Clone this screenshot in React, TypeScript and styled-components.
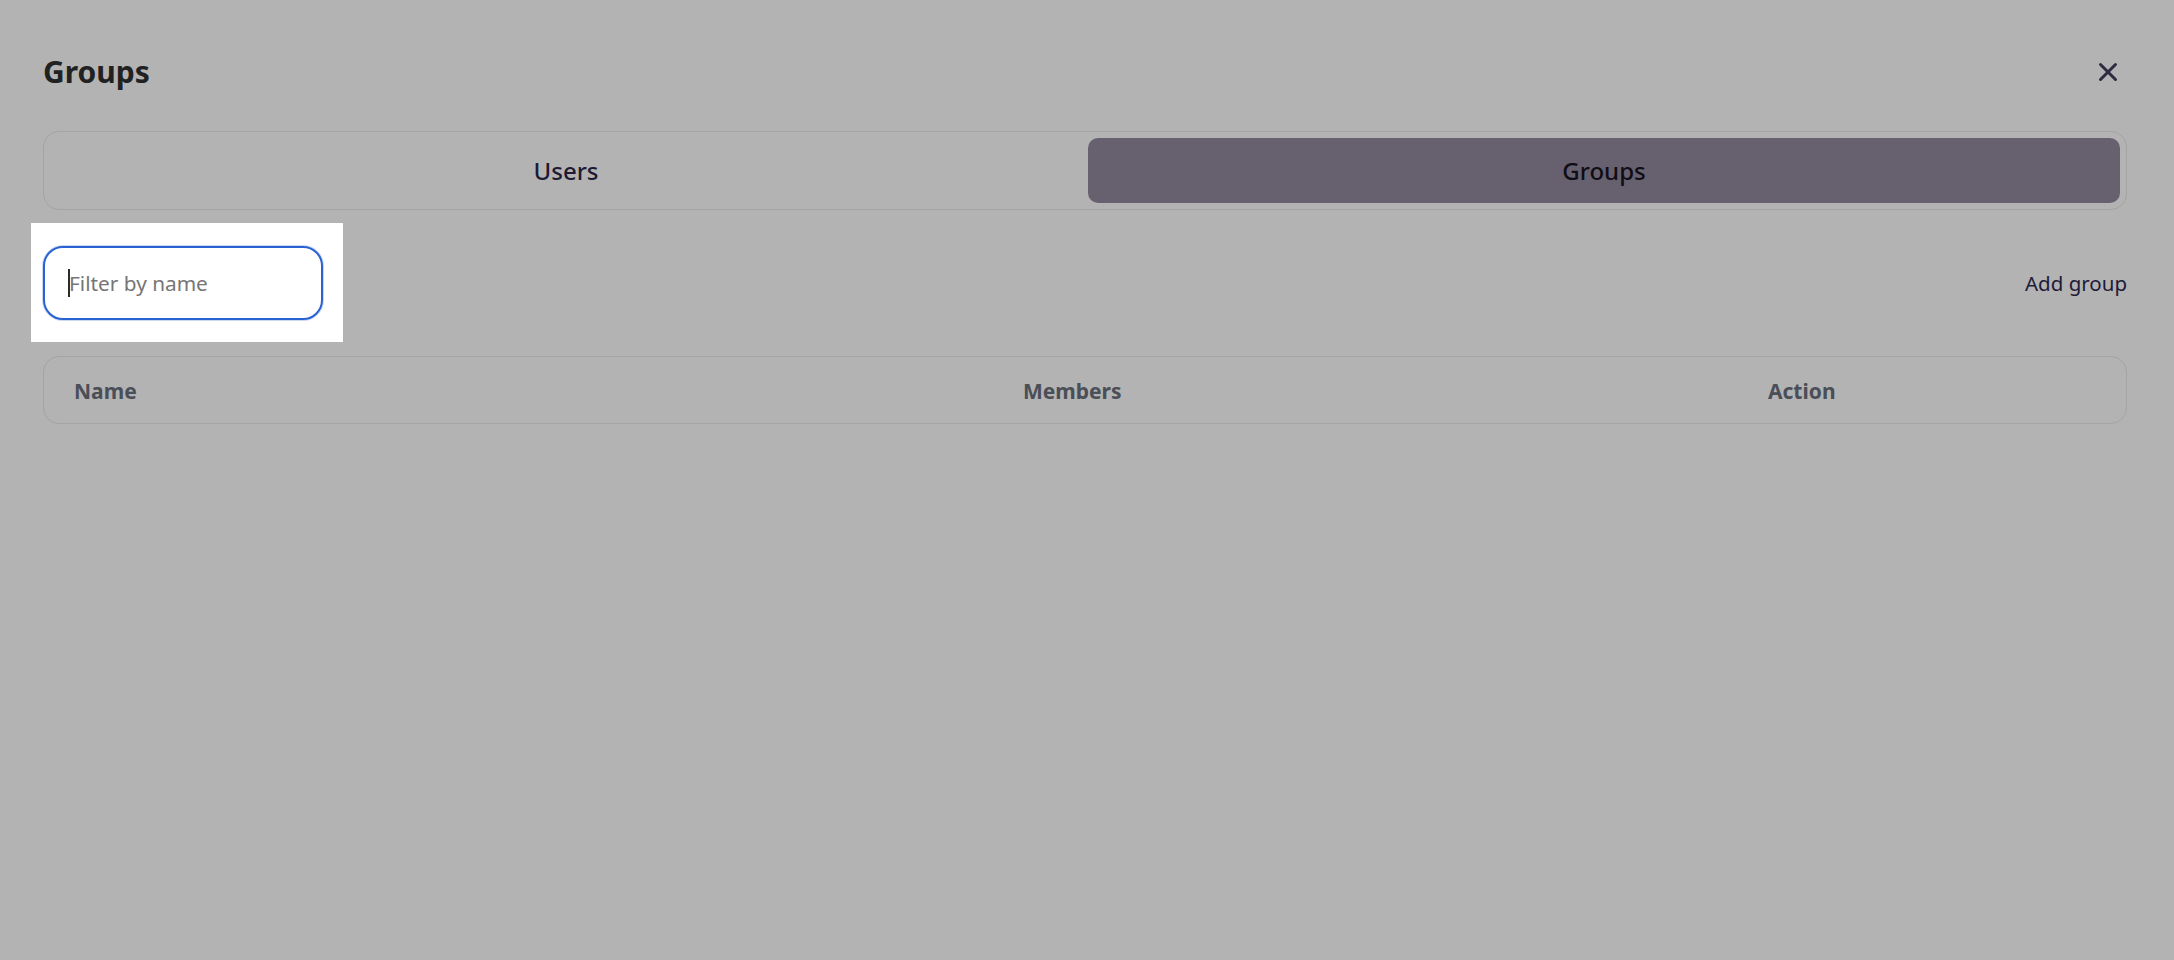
import styled, { createGlobalStyle } from 'styled-components';

const GlobalStyle = createGlobalStyle`
  html, body {
    margin: 0;
    padding: 0;
    background: #b3b3b3;
  }
  body {
    font-family: "Noto Sans", "Open Sans", Arial, sans-serif;
  }
  * {
    box-sizing: border-box;
  }
`;

const Page = styled.div`
  width: 2174px;
  height: 960px;
  padding: 52px 47px 0 43px;
  background: #b3b3b3;
  overflow: hidden;
`;

const Header = styled.div`
  display: flex;
  align-items: center;
  justify-content: space-between;
`;

const Title = styled.h1`
  margin: 0;
  font-size: 30px;
  font-weight: 700;
  line-height: 38px;
  color: #212121;
`;

const CloseButton = styled.button`
  display: flex;
  align-items: center;
  justify-content: center;
  width: 40px;
  height: 40px;
  margin-right: -1px;
  padding: 0;
  border: none;
  background: transparent;
  cursor: pointer;
`;

const Tabs = styled.div`
  display: flex;
  gap: 6px;
  margin-top: 39px;
  padding: 6px;
  border: 1px solid #a4a4a4;
  border-radius: 16px;
`;

const Tab = styled.button<{ $active?: boolean }>`
  flex: 1;
  height: 65px;
  display: flex;
  align-items: center;
  justify-content: center;
  border: none;
  border-radius: 10px;
  font-family: inherit;
  font-size: 24px;
  font-weight: 500;
  color: ${(p) => (p.$active ? '#0f0d15' : '#1d1a33')};
  background: ${(p) => (p.$active ? '#67616f' : 'transparent')};
  cursor: pointer;
`;

const Toolbar = styled.div`
  display: flex;
  align-items: center;
  justify-content: space-between;
  margin-top: 36px;
`;

const Spotlight = styled.div`
  position: relative;
  margin: -23px 0 -22px -12px;
  padding: 23px 20px 22px 12px;
  background: #ffffff;
`;

const Caret = styled.span`
  position: absolute;
  left: 37px;
  top: 46px;
  width: 2px;
  height: 28px;
  background: #2b2b2b;
  pointer-events: none;
`;

const FilterInput = styled.input`
  display: block;
  width: 280px;
  height: 74px;
  padding: 0 20px 0 24px;
  border: 2px solid #2a62d1;
  border-radius: 20px;
  box-shadow: 0 0 0 1px rgba(42, 98, 209, 0.25);
  outline: none;
  font-family: inherit;
  font-size: 20.8px;
  color: #222;
  caret-color: transparent;
  background: #fff;

  &::placeholder {
    color: #767676;
  }
`;

const AddButton = styled.button`
  padding: 0;
  border: none;
  background: transparent;
  font-family: inherit;
  font-size: 20.5px;
  color: #1e1a3a;
  cursor: pointer;
`;

const TableHead = styled.div`
  display: grid;
  grid-template-columns: 949px 745px 1fr;
  align-items: center;
  height: 68px;
  margin-top: 36px;
  padding: 2px 0 0 30px;
  border: 1px solid #a4a4a4;
  border-radius: 16px;
`;

const HeadCell = styled.div`
  font-size: 21px;
  font-weight: 700;
  color: #4a4e57;
`;

const CloseIcon = () => (
  <svg width="20" height="20" viewBox="0 0 20 20" fill="none">
    <path
      d="M2.5 2.5L17.5 17.5M17.5 2.5L2.5 17.5"
      stroke="#2f2a40"
      strokeWidth="3"
      strokeLinecap="round"
    />
  </svg>
);

export default function App() {
  return (
    <>
      <GlobalStyle />
      <Page>
        <Header>
          <Title>Groups</Title>
          <CloseButton aria-label="Close">
            <CloseIcon />
          </CloseButton>
        </Header>
        <Tabs>
          <Tab>Users</Tab>
          <Tab $active>Groups</Tab>
        </Tabs>
        <Toolbar>
          <Spotlight>
            <FilterInput placeholder="Filter by name" />
            <Caret />
          </Spotlight>
          <AddButton>Add group</AddButton>
        </Toolbar>
        <TableHead>
          <HeadCell>Name</HeadCell>
          <HeadCell>Members</HeadCell>
          <HeadCell>Action</HeadCell>
        </TableHead>
      </Page>
    </>
  );
}
